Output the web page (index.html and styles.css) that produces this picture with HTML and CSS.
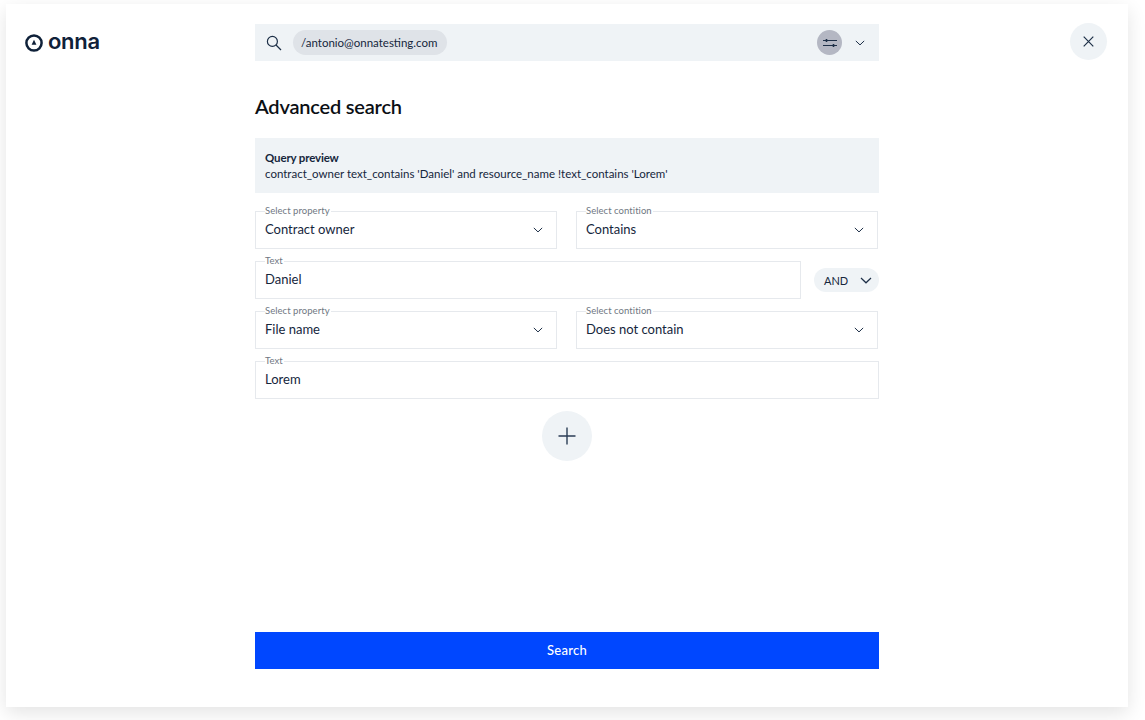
FILE: index.html
```html
<!DOCTYPE html>
<html lang="en">
<head>
    <meta charset="UTF-8">
    <meta name="viewport" content="width=device-width, initial-scale=1.0">
    <title>Onna - Advanced search</title>
    <link rel="stylesheet" href="styles.css">
</head>
<body>
    <div class="panel">
        <div class="logo">
            <svg class="logo-mark" width="18" height="18" viewBox="0 0 18 18">
                <circle cx="9" cy="9" r="7.6" fill="none" stroke="#0f2139" stroke-width="2.5"/>
                <path d="M9 5.8 L11.4 10.8 L6.6 10.8 Z" fill="#0f2139"/>
            </svg>
            <span class="logo-name">onna</span>
        </div>

        <main class="content">
            <div class="search-bar">
                <svg class="search-icon" width="16" height="16" viewBox="0 0 16 16" fill="none" stroke="#1d2f47" stroke-width="1.2">
                    <circle cx="6.4" cy="6.4" r="5"/>
                    <path d="M10 10 L15 15"/>
                </svg>
                <span class="search-chip">/antonio@onnatesting.com</span>
                <span class="filter-btn">
                    <svg width="14" height="10" viewBox="0 0 14 10" fill="none" stroke="#1d2f47" stroke-width="1">
                        <path d="M0 2.5 H14 M0 7.5 H14"/>
                        <path d="M3.5 1 V4 M10.5 6 V9" stroke-width="1.6"/>
                    </svg>
                </span>
                <svg class="chevron" viewBox="0 0 12 7"><path d="M1 1 L6 5.8 L11 1"/></svg>
            </div>

            <h1>Advanced search</h1>

            <div class="preview">
                <div class="preview-title">Query preview</div>
                <div class="preview-text">contract_owner text_contains 'Daniel' and resource_name !text_contains 'Lorem'</div>
            </div>

            <div class="rows">
                <div class="row">
                    <div class="field grow">
                        <span class="field-label">Select property</span>
                        <span class="field-value">Contract owner</span>
                        <svg class="chevron" viewBox="0 0 12 7"><path d="M1 1 L6 5.8 L11 1"/></svg>
                    </div>
                    <div class="field grow">
                        <span class="field-label">Select contition</span>
                        <span class="field-value">Contains</span>
                        <svg class="chevron" viewBox="0 0 12 7"><path d="M1 1 L6 5.8 L11 1"/></svg>
                    </div>
                    <span class="row-end"></span>
                </div>
                <div class="row row-text">
                    <div class="field grow">
                        <span class="field-label">Text</span>
                        <span class="field-value">Daniel</span>
                    </div>
                    <div class="and-pill">
                        AND
                        <svg class="chevron" viewBox="0 0 12 7"><path d="M1 1 L6 5.8 L11 1"/></svg>
                    </div>
                </div>
                <div class="row">
                    <div class="field grow">
                        <span class="field-label">Select property</span>
                        <span class="field-value">File name</span>
                        <svg class="chevron" viewBox="0 0 12 7"><path d="M1 1 L6 5.8 L11 1"/></svg>
                    </div>
                    <div class="field grow">
                        <span class="field-label">Select contition</span>
                        <span class="field-value">Does not contain</span>
                        <svg class="chevron" viewBox="0 0 12 7"><path d="M1 1 L6 5.8 L11 1"/></svg>
                    </div>
                    <span class="row-end"></span>
                </div>
                <div class="row">
                    <div class="field grow">
                        <span class="field-label">Text</span>
                        <span class="field-value">Lorem</span>
                    </div>
                </div>
            </div>

            <div class="add-wrap">
                <span class="add-btn">
                    <svg width="18" height="18" viewBox="0 0 18 18" stroke="#2b3d55" stroke-width="1.4"><path d="M9 0.5 V17.5 M0.5 9 H17.5"/></svg>
                </span>
            </div>

            <button class="search-btn">Search</button>
        </main>

        <div class="close-col">
            <span class="close-btn">
                <svg width="11" height="11" viewBox="0 0 11 11" stroke="#1d2f47" stroke-width="1.2"><path d="M0.7 0.7 L10.3 10.3 M10.3 0.7 L0.7 10.3"/></svg>
            </span>
        </div>
    </div>
</body>
</html>
```

FILE: styles.css
```css
* {
    box-sizing: border-box;
}

body {
    font-family: Lato, 'Noto Sans', sans-serif;
    margin: 0;
    padding: 4px 17px 13px 6px;
    height: 720px;
    overflow: hidden;
    background: white;
    color: #15263c;
}

.panel {
    display: grid;
    grid-template-columns: 249px 624px 1fr;
    height: 703px;
    padding-top: 20px;
    background: white;
    box-shadow: 0 6px 18px rgba(0,0,0,0.11);
}

.logo {
    display: flex;
    align-items: center;
    gap: 5px;
    height: 37px;
    padding-left: 19px;
}

.logo-name {
    font-family: Inter, sans-serif;
    font-size: 22px;
    font-weight: 600;
    letter-spacing: -0.3px;
    color: #0f2139;
    position: relative;
    top: -2px;
}

.content {
    display: flex;
    flex-direction: column;
}

.search-bar {
    display: flex;
    align-items: center;
    height: 37px;
    padding: 0 14px 0 11px;
    background: #eff3f6;
}

.search-icon {
    flex-shrink: 0;
}

.search-chip {
    margin-left: 11px;
    padding: 0 10px 0 8px;
    height: 25px;
    line-height: 25px;
    border-radius: 13px;
    background: #dfe3e8;
    font-size: 11.5px;
}

.filter-btn {
    display: flex;
    align-items: center;
    justify-content: center;
    width: 25px;
    height: 25px;
    margin-left: auto;
    border-radius: 50%;
    background: #b4b7c3;
}

.chevron {
    flex-shrink: 0;
    width: 10px;
    height: 6px;
    fill: none;
    stroke: #1d2f47;
    stroke-width: 1.2;
}

.search-bar .chevron {
    margin-left: 13px;
}

h1 {
    margin: 31px 0 18px;
    font-size: 20px;
    line-height: 28px;
    font-weight: 600;
    color: #0b0f14;
    letter-spacing: -0.2px;
}

.preview {
    height: 55px;
    padding: 12px 10px 0;
    background: #eff3f6;
    font-size: 11.5px;
    line-height: 16px;
}

.preview-title {
    font-weight: 700;
    letter-spacing: -0.15px;
}

.rows {
    display: flex;
    flex-direction: column;
    gap: 12px;
    margin-top: 18px;
}

.row {
    display: flex;
    align-items: center;
    gap: 19px;
}

.row-end {
    width: 1px;
    margin-left: -19px;
    flex-shrink: 0;
}

.row-text {
    gap: 13px;
}

.field {
    position: relative;
    display: flex;
    align-items: center;
    justify-content: space-between;
    height: 38px;
    padding: 0 13px 0 9px;
    border: 1px solid #e6e9ed;
}

.grow {
    flex: 1;
}

.field-label {
    position: absolute;
    top: -7px;
    left: 9px;
    padding-right: 1px;
    background: white;
    font-size: 9.5px;
    line-height: 12px;
    letter-spacing: 0.05px;
    color: #6f7782;
}

.field-value {
    margin-bottom: 2px;
    font-size: 13px;
}

.and-pill {
    display: flex;
    align-items: center;
    justify-content: space-between;
    width: 65px;
    height: 24px;
    padding: 0 7px 0 10px;
    border-radius: 12px;
    background: #eff3f6;
    font-size: 11px;
}

.and-pill .chevron {
    width: 12px;
    height: 7px;
}

.add-wrap {
    display: flex;
    justify-content: center;
    margin-top: 12px;
}

.add-btn {
    display: flex;
    align-items: center;
    justify-content: center;
    width: 50px;
    height: 50px;
    border-radius: 50%;
    background: #eff3f6;
}

.search-btn {
    height: 37px;
    margin-top: 171px;
    padding-bottom: 2px;
    border: none;
    background: #0047ff;
    color: white;
    font-family: inherit;
    font-size: 13px;
    font-weight: 500;
    letter-spacing: 0.3px;
}

.close-col {
    display: flex;
    justify-content: flex-end;
    padding-right: 21px;
}

.close-btn {
    display: flex;
    align-items: center;
    justify-content: center;
    width: 37px;
    height: 37px;
    margin-top: -1px;
    border-radius: 50%;
    background: #eff3f6;
}
```
